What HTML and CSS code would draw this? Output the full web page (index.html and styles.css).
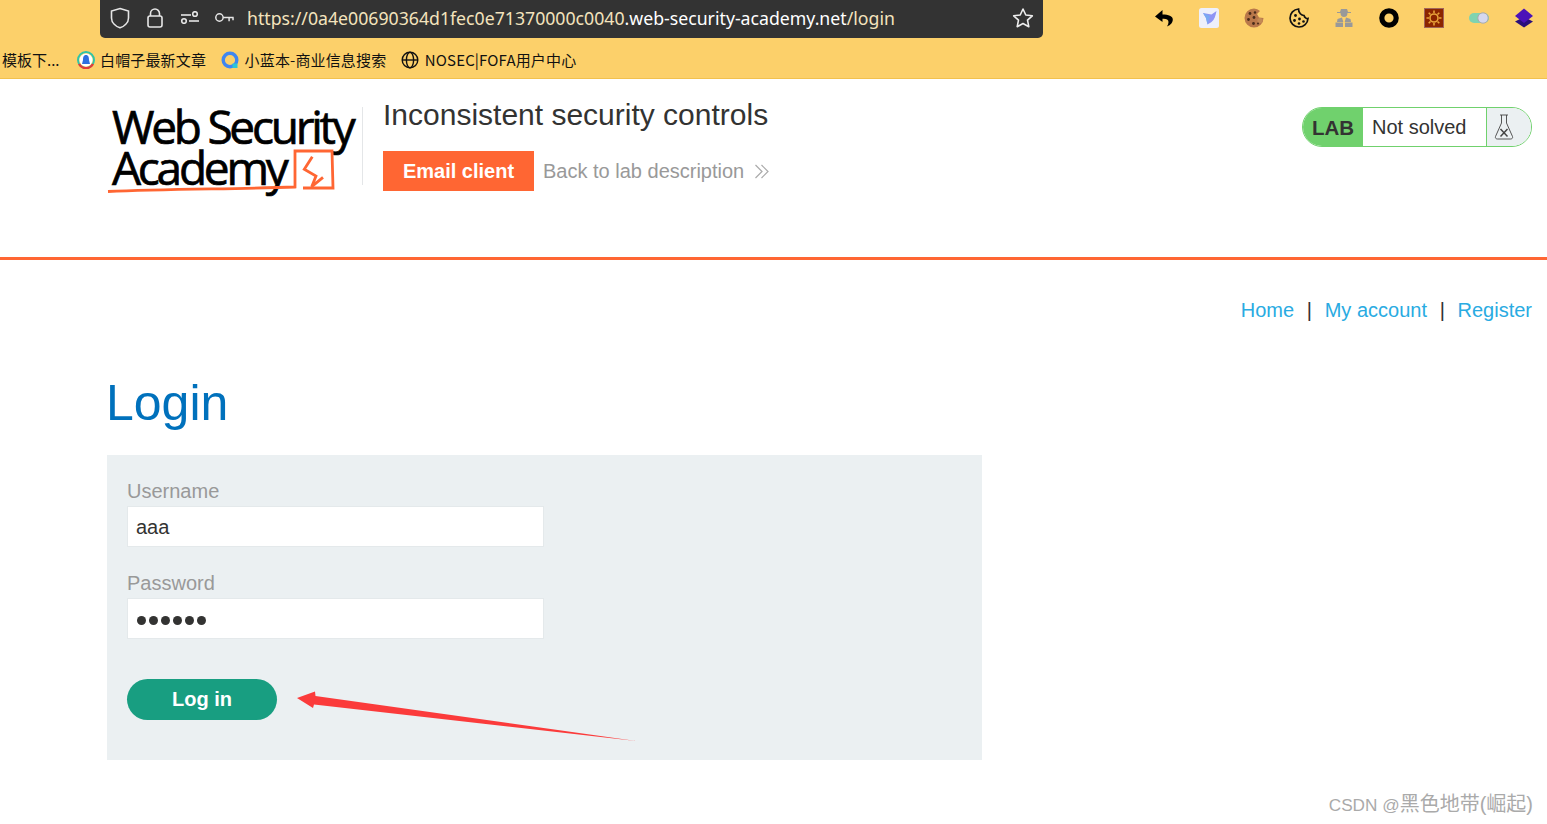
FILE: index.html
```html
<!DOCTYPE html>
<html lang="en">
<head>
<meta charset="utf-8">
<title>Login</title>
<link rel="stylesheet" href="styles.css">
</head>
<body>
<div class="browser">
  <div class="toolbar">
    <div class="urlbar">
      <svg class="ub-icon shield" viewBox="0 0 20 22"><path d="M10 1.5 L18.5 4 V11 C18.5 16 14 19.5 10 20.8 C6 19.5 1.5 16 1.5 11 V4 Z"/></svg>
      <svg class="ub-icon lock" viewBox="0 0 16 20"><rect x="1" y="8" width="14" height="11" rx="2"/><path d="M3.5 8 V5.5 a4.5 4.5 0 0 1 9 0 V8"/></svg>
      <svg class="ub-icon perm" viewBox="0 0 20 13"><circle cx="15" cy="3" r="2.3"/><path d="M1 4 H11"/><circle cx="4" cy="10" r="2.3"/><path d="M9 10 H19"/></svg>
      <svg class="ub-icon key" viewBox="0 0 22 12"><circle cx="5.5" cy="6" r="4"/><path d="M9.5 6 H21 M16 6 V10 M20.3 6 V9"/></svg>
      <span class="url">https://0a4e00690364d1fec0e71370000c0040<span class="url-domain">.web-security-academy.net</span>/login</span>
      <svg class="ub-star" viewBox="0 0 22 22"><path d="M11 2 L13.8 8 L20.3 8.8 L15.5 13.2 L16.8 19.7 L11 16.5 L5.2 19.7 L6.5 13.2 L1.7 8.8 L8.2 8 Z"/></svg>
    </div>
    <div class="extensions">
      <svg class="ext" viewBox="0 0 20 20"><path d="M8.5 2 L1 8.5 L8.5 14 V10.8 C12 10.5 14.5 11.5 14.5 14 C14.5 15.5 14 17 13 18.5 C17 17 18.8 14 18.8 11.5 C18.8 8 14.5 6.5 8.5 6.5 Z" fill="#000"/></svg>
      <svg class="ext" viewBox="0 0 20 20"><rect width="20" height="20" rx="2.5" fill="#eef0fb"/><path d="M17.5 3 L12.5 6.5 L4 5 L7 10 L8.5 16.5 L12.5 14 C15.5 11.5 16.5 8 17.5 3 Z" fill="#8f95f5"/><path d="M4 5 L11 8 L8.5 16.5 L7 10 Z" fill="#79a9f2"/></svg>
      <svg class="ext" viewBox="0 0 20 20"><path d="M10 .5 A9.5 9.5 0 1 0 19.5 10 L15 9.5 L13 6 L16 3 A9.5 9.5 0 0 0 10 .5Z" fill="#b9784a"/><circle cx="16" cy="12.5" r="2.6" fill="#c48a55"/><circle cx="6" cy="5.5" r="1.4" fill="#4a2c1a"/><circle cx="11" cy="4.5" r="1.2" fill="#4a2c1a"/><circle cx="4.5" cy="11.5" r="1.4" fill="#4a2c1a"/><circle cx="10" cy="9.5" r="1.4" fill="#4a2c1a"/><circle cx="9.5" cy="15.5" r="1.4" fill="#4a2c1a"/><circle cx="14" cy="15.5" r="1" fill="#4a2c1a"/></svg>
      <svg class="ext" viewBox="0 0 20 20"><path d="M9.5 1 A9 9 0 1 0 19 10.5 C17.5 11 15.5 9.5 15 7.5 C12.5 7.5 9.5 5 9.5 1 Z" fill="none" stroke="#111" stroke-width="1.7"/><circle cx="6.5" cy="7.5" r="1.4" fill="#111"/><circle cx="5.5" cy="12.5" r="1.4" fill="#111"/><circle cx="10.5" cy="11" r="1.4" fill="#111"/><circle cx="10" cy="15.5" r="1.3" fill="#111"/><circle cx="14.5" cy="13.5" r="1.3" fill="#111"/></svg>
      <svg class="ext" viewBox="0 0 20 20"><circle cx="10" cy="5.5" r="3.4" fill="#999"/><path d="M7 1 H13 L14 4 H17 V5 H3 V4 H6 Z" fill="#999"/><path d="M3.5 11 L8 9.5 L9.3 14 H3 Z M16.5 11 L12 9.5 L10.7 14 H17 Z M1.5 14.5 H9 V19 H1.5 Z M11 14.5 H18.5 V19 H11 Z" fill="#999"/></svg>
      <svg class="ext" viewBox="0 0 20 20"><circle cx="10" cy="10" r="7.2" fill="none" stroke="#000" stroke-width="5.2"/></svg>
      <svg class="ext" viewBox="0 0 20 20"><rect x=".5" y=".5" width="19" height="19" fill="#8c2500" stroke="#a0655a"/><circle cx="10" cy="10" r="4" fill="none" stroke="#e8a33a" stroke-width="1.6"/><path d="M10 2.5 V5 M10 15 V17.5 M2.5 10 H5 M15 10 H17.5 M4.7 4.7 L6.5 6.5 M13.5 13.5 L15.3 15.3 M15.3 4.7 L13.5 6.5 M6.5 13.5 L4.7 15.3" stroke="#e8a33a" stroke-width="1.6"/></svg>
      <svg class="ext" viewBox="0 0 20 12"><rect y="1" width="20" height="10" rx="5" fill="#7fd3b0"/><circle cx="14" cy="6" r="5.2" fill="#d5d8ef" stroke="#aaa" stroke-width="1"/></svg>
      <svg class="ext" viewBox="0 0 20 20"><path d="M10 9 L19 13.5 L10 19.5 L1 13.5 Z" fill="#2a0f7a"/><path d="M10 .5 L19 8 L10 15 L1 8 Z" fill="#4b12b8"/></svg>
    </div>
  </div>
  <div class="bookmarks">
    <span class="bm bm-cut">模板下...</span>
    <span class="bm"><svg class="bm-ico" viewBox="0 0 18 18"><circle cx="9" cy="9" r="8" fill="none" stroke="#2fc4a8" stroke-width="2"/><path d="M2 13 A8 8 0 0 0 16 13" fill="none" stroke="#e23a3a" stroke-width="2.4"/><circle cx="9" cy="9" r="6.5" fill="#fff"/><path d="M9 4 C11.5 4 12 6.5 12 9 L13 13 H5 L6 9 C6 6.5 6.5 4 9 4Z" fill="#2f6fe0"/></svg>白帽子最新文章</span>
    <span class="bm"><svg class="bm-ico" viewBox="0 0 18 18"><circle cx="9" cy="9" r="6.8" fill="none" stroke="#3f86f0" stroke-width="3.4"/><rect x="11.5" y="12.5" width="5" height="4.5" fill="#2cc6d6"/></svg>小蓝本-商业信息搜索</span>
    <span class="bm"><svg class="bm-ico" viewBox="0 0 18 18"><g fill="none" stroke="#111" stroke-width="1.4"><circle cx="9" cy="9" r="7.8"/><ellipse cx="9" cy="9" rx="3.6" ry="7.8"/><path d="M1.2 9 H16.8"/></g></svg>NOSEC|FOFA用户中心</span>
  </div>
</div>

<header class="lab-header">
  <div class="logo">
    <div class="logo-text">
      <span class="logo-line">Web Security</span>
      <span class="logo-line">Academy</span>
    </div>
    <svg class="logo-mark" viewBox="0 0 230 90"><path d="M1 88.5 C60 86 130 86 188 84 V48 H225 L226 85 H196" fill="none" stroke="#ff6633" stroke-width="2.8"/><path d="M205.3 53.7 L197.3 66.3 L209 73 L204.7 83.7 L216 74.3" fill="none" stroke="#ff6633" stroke-width="2.8"/></svg>
  </div>
  <div class="lab-info">
    <h2 class="lab-title">Inconsistent security controls</h2>
    <div class="lab-actions">
      <a class="btn-email">Email client</a>
      <a class="back-link">Back to lab description
        <svg class="chev" viewBox="0 0 16 16"><path d="M1.5 1.5 L8 8 L1.5 14.5 M7.5 1.5 L14 8 L7.5 14.5"/></svg>
      </a>
    </div>
  </div>
  <div class="status">
    <span class="status-lab">LAB</span>
    <span class="status-text">Not solved</span>
    <span class="status-icon">
      <svg class="flask" viewBox="0 0 20 26"><path d="M6 1 H14 M7.5 1 V9 L1.5 22.5 C1 24 2 25 3.5 25 H16.5 C18 25 19 24 18.5 22.5 L12.5 9 V1" /><path d="M6.5 15 L13.5 22.5 M13.5 15 L6.5 22.5" class="flask-x"/></svg>
    </span>
  </div>
</header>

<main class="content">
  <nav class="top-nav">
    <a>Home</a><span class="sep">|</span><a>My account</a><span class="sep">|</span><a>Register</a>
  </nav>
  <h1 class="page-title">Login</h1>
  <form class="login-form">
    <label class="field-label">Username</label>
    <div class="input">aaa</div>
    <label class="field-label second">Password</label>
    <div class="input dots">
      <i></i><i></i><i></i><i></i><i></i><i></i>
    </div>
    <button type="button" class="btn-login">Log in</button>
  </form>
</main>

<svg class="annot" viewBox="0 0 345 60"><path d="M6 16 L24 9.5 L24.5 14 L345 59 L23 22.5 L22 26 Z" fill="#fb3b3b"/></svg>
<div class="watermark"><span class="wm-latin">CSDN @</span>黑色地带(崛起)</div>
</body>
</html>
```
FILE: styles.css
```css
* { box-sizing: border-box; }
html, body { margin: 0; padding: 0; }
body {
  width: 1547px;
  height: 824px;
  overflow: hidden;
  position: relative;
  background: #fff;
  font-family: "Liberation Sans", Arial, sans-serif;
  color: #333332;
}

/* browser chrome */
.browser {
  height: 79px;
  background: #fcd06a;
  border-bottom: 1px solid #f2c14e;
}
.toolbar { display: flex; height: 38px; padding-left: 100px; }
.urlbar {
  width: 943px;
  height: 38px;
  background: #333333;
  border-radius: 0 0 5px 5px;
  display: flex;
  align-items: center;
  padding: 0 9px 3px 10px;
}
.ub-icon { fill: none; stroke: #e6e6e6; stroke-width: 1.6; flex: none; }
.shield { width: 20px; height: 22px; }
.lock { width: 16px; height: 20px; margin-left: 17px; }
.perm { width: 20px; height: 13px; margin-left: 17px; }
.key { width: 21px; height: 11px; margin-left: 14px; }
.url {
  margin-left: 12px;
  font: 17.7px "Noto Sans", sans-serif;
  color: #f4e3bd;
  white-space: nowrap;
}
.url-domain { color: #fff; }
.ub-star {
  width: 22px;
  height: 22px;
  margin-left: auto;
  fill: none;
  stroke: #eee;
  stroke-width: 1.6;
  stroke-linejoin: round;
}
.extensions {
  display: flex;
  align-items: center;
  gap: 25px;
  margin-left: 111px;
  height: 36px;
}
.ext { width: 20px; height: 20px; display: block; }
.bookmarks {
  display: flex;
  align-items: center;
  height: 40px;
  margin-top: 1px;
  padding: 0 0 0 2px;
  gap: 15px;
  font: 15px "Noto Sans CJK SC", "Noto Sans", sans-serif;
  letter-spacing: .15px;
  color: #111;
}
.bm { display: flex; align-items: center; gap: 5.5px; white-space: nowrap; }
.bm-cut { margin-right: 2px; letter-spacing: 0; }
.bm-ico { width: 18px; height: 18px; flex: none; margin-top: 2px; }

/* lab header */
.lab-header {
  height: 181px;
  border-bottom: 3px solid #ff6633;
  display: flex;
  align-items: flex-start;
  padding: 0 15px 0 107px;
}
.logo {
  position: relative;
  width: 256px;
  height: 78px;
  margin-top: 28px;
  border-right: 1px solid #e4e6e8;
  flex: none;
}
.logo-text {
  margin-top: -1px;
  font: 400 46px/41px "Open Sans", sans-serif;
  letter-spacing: -3.25px;
  -webkit-text-stroke: .7px #000;
  color: #000;
  padding-left: 5px;
}
.logo-line { display: block; white-space: nowrap; }
.logo-mark {
  position: absolute;
  left: 0;
  top: -4px;
  width: 230px;
  height: 90px;
}
.lab-info { margin-left: 20px; }
.lab-title {
  margin: 18px 0 0;
  font-size: 30px;
  font-weight: 400;
  line-height: 36px;
  color: #333332;
}
.lab-actions { display: flex; align-items: center; margin-top: 18px; }
.btn-email {
  width: 151px;
  height: 40px;
  background: #ff6633;
  color: #fff;
  font-weight: 700;
  font-size: 20px;
  line-height: 40px;
  text-align: center;
}
.back-link {
  margin-left: 9px;
  color: #999;
  font-size: 20px;
  display: flex;
  align-items: center;
  gap: 10px;
}
.chev { width: 16px; height: 17px; fill: none; stroke: #aaa; stroke-width: 1.2; }
.status {
  margin-left: auto;
  margin-top: 28px;
  width: 230px;
  height: 40px;
  display: flex;
  border: 1px solid #70d16d;
  border-radius: 20px;
  overflow: hidden;
  font-size: 20px;
}
.status-lab {
  width: 60px;
  background: #70d16d;
  font-weight: 700;
  font-size: 20.5px;
  text-align: center;
  line-height: 40px;
}
.status-text {
  width: 124px;
  padding-left: 9px;
  line-height: 38px;
  border-right: 1px solid #70d16d;
}
.status-icon {
  flex: 1;
  background: #ebf0f2;
  display: flex;
  align-items: center;
  padding-left: 7px;
}
.flask { width: 20px; height: 26px; fill: none; stroke: #444; stroke-width: .9; }
.flask-x { stroke-width: 1.5; }

/* content */
.content { padding: 0 15px 0 107px; }
.top-nav {
  display: flex;
  justify-content: flex-end;
  margin-top: 37px;
  font-size: 20px;
  line-height: 26px;
  color: #333332;
}
.top-nav a { color: #29abe2; }
.sep { margin: 0 12.7px; }
.page-title {
  margin: 47px 0 0 -1px;
  font-size: 50px;
  font-weight: 400;
  line-height: 66px;
  color: #0071bc;
}
.login-form {
  margin-top: 19px;
  width: 875px;
  height: 305px;
  background: #ebf0f2;
  padding: 24px 20px 0;
  display: flex;
  flex-direction: column;
  align-items: flex-start;
}
.field-label { color: #999; font-size: 20px; line-height: 24px; }
.field-label.second { margin-top: 24px; }
.input {
  width: 417px;
  height: 41px;
  margin-top: 3px;
  background: #fff;
  border: 1px solid #e4e9eb;
  padding-left: 8px;
  font-size: 20px;
  line-height: 40px;
  color: #333332;
}
.dots { display: flex; align-items: center; gap: 3px; padding: 3px 0 0 9px; }
.dots i {
  display: block;
  width: 9px;
  height: 9px;
  border-radius: 50%;
  background: #333332;
}
.btn-login {
  margin-top: 40px;
  width: 150px;
  height: 41px;
  border: 0;
  border-radius: 21px;
  background: #189e81;
  color: #fff;
  font: 700 20px "Liberation Sans", Arial, sans-serif;
}

/* overlays */
.annot {
  position: absolute;
  left: 291px;
  top: 682px;
  width: 345px;
  height: 60px;
}
.watermark {
  position: absolute;
  right: 14px;
  top: 791px;
  font: 20px "Liberation Sans", "Noto Sans CJK SC", sans-serif;
  line-height: 26px;
  color: #aaa;
  white-space: nowrap;
}
.wm-latin { font-size: 17.2px; }
```
